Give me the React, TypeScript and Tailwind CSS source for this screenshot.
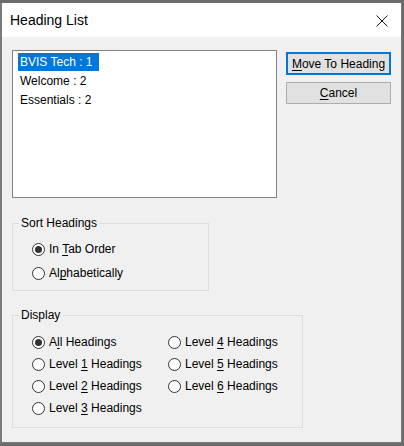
import { ReactNode } from "react";

const font = { fontFamily: '"Liberation Sans", Arial, sans-serif' };

const headings = [
    { label: "BVIS Tech : 1", selected: true },
    { label: "Welcome : 2", selected: false },
    { label: "Essentials : 2", selected: false },
];

const Radio = ({ checked, children, rowClass }: { checked?: boolean; children: ReactNode; rowClass: string }) => (
    <div className={`flex items-center ${rowClass}`}>
        <span className="flex h-[13px] w-[13px] shrink-0 items-center justify-center rounded-full border border-[#333] bg-white">
            {checked && <span className="h-[7px] w-[7px] rounded-full bg-[#333]" />}
        </span>
        <span className="ml-[4px] text-[12px] leading-none text-black">{children}</span>
    </div>
);

const Group = ({ title, className, children }: { title: string; className: string; children: ReactNode }) => (
    <fieldset className={`border border-[#dcdcdc] pl-[6px] ${className}`}>
        <legend className="px-[2px] text-[12px] leading-[16px] text-black">{title}</legend>
        {children}
    </fieldset>
);

export default function App() {
    return (
        <div className="h-[446px] w-[404px] overflow-hidden bg-[#6b6b6b]" style={font}>
            <div className="mt-[3px] flex h-[440px] w-[402px] flex-col border-b border-l-2 border-r border-[#7a7a7a] bg-[#f0f0f0]">
                {/* title bar */}
                <div className="flex h-[34px] shrink-0 items-center justify-between bg-white pl-[8px] pr-[13px]">
                    <span className="text-[14px] text-black">Heading List</span>
                    <svg width="12" height="12" viewBox="0 0 12 12" className="mt-[1px]">
                        <path d="M0.5 0.5 L11.5 11.5 M11.5 0.5 L0.5 11.5" stroke="#111" strokeWidth="1" fill="none" />
                    </svg>
                </div>

                <div className="flex flex-col pl-[10px] pt-[13px]">
                    <div className="flex">
                        {/* heading list box */}
                        <div className="h-[148px] w-[265px] border border-[#828282] bg-white pl-[5px] pt-[1px]">
                            {headings.map((h) => (
                                <div key={h.label} className="flex h-[19px] items-center">
                                    <span
                                        className={`inline-block h-[18px] pl-[2px] pr-[6px] text-[12px] leading-[18px] ${
                                            h.selected ? "bg-[#0078d7] text-white" : "text-black"
                                        }`}
                                    >
                                        {h.label}
                                    </span>
                                </div>
                            ))}
                        </div>

                        <div className="ml-[9px] flex flex-col pt-[2px]">
                            <button className="h-[23px] w-[105px] border border-[#0078d7] bg-[#e1e1e1] text-[12px] text-black outline outline-1 -outline-offset-2 outline-[#0078d7]">
                                <span className="underline underline-offset-2">M</span>ove To Heading
                            </button>
                            <button className="mt-[7px] h-[22px] w-[105px] border border-[#adadad] bg-[#e1e1e1] text-[12px] text-black">
                                <span className="underline underline-offset-2">C</span>ancel
                            </button>
                        </div>
                    </div>

                    <Group title="Sort Headings" className="mt-[17px] h-[76px] w-[197px]">
                        <div className="mt-[6px] pl-[13px]">
                            <Radio checked rowClass="h-[24px]">
                                In <span className="underline underline-offset-2">T</span>ab Order
                            </Radio>
                            <Radio rowClass="h-[24px]">
                                Al<span className="underline underline-offset-2">p</span>habetically
                            </Radio>
                        </div>
                    </Group>

                    <Group title="Display" className="mt-[16px] h-[121px] w-[291px]">
                        <div className="mt-[8px] flex pl-[13px]">
                            <div className="flex w-[136px] flex-col">
                                <Radio checked rowClass="h-[22px]">
                                    A<span className="underline underline-offset-2">l</span>l Headings
                                </Radio>
                                {[1, 2, 3].map((n) => (
                                    <Radio key={n} rowClass="h-[22px]">
                                        Level <span className="underline underline-offset-2">{n}</span> Headings
                                    </Radio>
                                ))}
                            </div>
                            <div className="flex flex-col">
                                {[4, 5, 6].map((n) => (
                                    <Radio key={n} rowClass="h-[22px]">
                                        Level <span className="underline underline-offset-2">{n}</span> Headings
                                    </Radio>
                                ))}
                            </div>
                        </div>
                    </Group>
                </div>
            </div>
        </div>
    );
}
